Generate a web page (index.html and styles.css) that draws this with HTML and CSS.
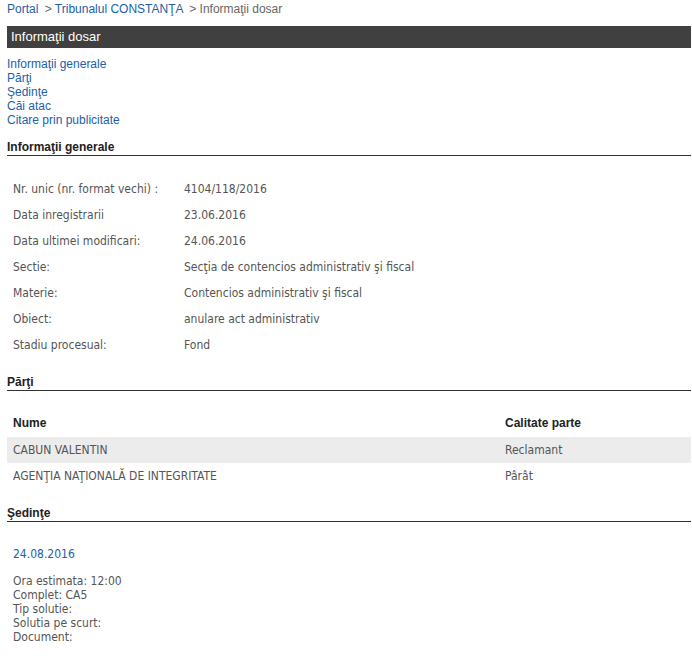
FILE: index.html
```html
<!DOCTYPE html>
<html lang="ro">
<head>
<meta charset="utf-8">
<title>Informaţii dosar</title>
<link rel="stylesheet" href="styles.css">
</head>
<body>
<div class="page">
  <div class="breadcrumb">
    <a href="#">Portal</a> <span class="sep">&gt;</span> <a href="#">Tribunalul CONSTANŢA</a> <span class="sep">&gt; Informaţii dosar</span>
  </div>
  <div class="titlebar">Informaţii dosar</div>
  <div class="toc">
    <a href="#gen">Informaţii generale</a>
    <a href="#parti">Părţi</a>
    <a href="#sed">Şedinţe</a>
    <a href="#cai">Căi atac</a>
    <a href="#cit">Citare prin publicitate</a>
  </div>

  <h2 class="section-title" id="gen">Informaţii generale</h2>
  <table class="info">
    <tr><td class="lbl">Nr. unic (nr. format vechi) :</td><td>4104/118/2016</td></tr>
    <tr><td class="lbl">Data inregistrarii</td><td>23.06.2016</td></tr>
    <tr><td class="lbl">Data ultimei modificari:</td><td>24.06.2016</td></tr>
    <tr><td class="lbl">Sectie:</td><td>Secţia de contencios administrativ şi fiscal</td></tr>
    <tr><td class="lbl">Materie:</td><td>Contencios administrativ şi fiscal</td></tr>
    <tr><td class="lbl">Obiect:</td><td>anulare act administrativ</td></tr>
    <tr><td class="lbl">Stadiu procesual:</td><td>Fond</td></tr>
  </table>

  <h2 class="section-title" id="parti">Părţi</h2>
  <table class="parti">
    <tr class="head"><th class="name">Nume</th><th>Calitate parte</th></tr>
    <tr class="alt"><td class="name">CABUN VALENTIN</td><td>Reclamant</td></tr>
    <tr><td class="name">AGENŢIA NAŢIONALĂ DE INTEGRITATE</td><td>Pârât</td></tr>
  </table>

  <h2 class="section-title" id="sed">Şedinţe</h2>
  <div class="sedinta">
    <div class="date">24.08.2016</div>
    <div class="details">
      <div>Ora estimata: 12:00</div>
      <div>Complet: CA5</div>
      <div>Tip solutie:</div>
      <div>Solutia pe scurt:</div>
      <div>Document:</div>
    </div>
  </div>
</div>
</body>
</html>
```

FILE: styles.css
```css
html, body {
  margin: 0;
  padding: 0;
  background: #ffffff;
}

.page {
  padding: 0 1px 0 7px;
  font-family: "Liberation Sans", Arial, sans-serif;
  font-size: 12px;
  color: #333333;
}

a {
  color: #2161ab;
  text-decoration: none;
}

.breadcrumb {
  line-height: 18px;
  height: 18px;
  font-size: 12px;
}

.breadcrumb .sep {
  color: #666666;
  margin-left: 3px;
}

.titlebar {
  margin-top: 8px;
  height: 22px;
  line-height: 22px;
  background: #404040;
  color: #ffffff;
  font-size: 13px;
  padding-left: 4px;
}

.toc {
  margin-top: 9px;
  display: flex;
  flex-direction: column;
  line-height: normal;
}

.section-title {
  margin: 13px 0 0 0;
  font-size: 12px;
  font-weight: bold;
  line-height: 14px;
  color: #222222;
  padding-bottom: 1px;
  border-bottom: 1px solid #333333;
}

.info + .section-title,
.parti + .section-title {
  margin-top: 17px;
}

table {
  border-collapse: collapse;
  width: 100%;
}

.info {
  margin-top: 20px;
  font-family: "DejaVu Sans Condensed", "DejaVu Sans", sans-serif;
  font-size: 12px;
  color: #555555;
}

.info td {
  height: 26px;
  padding: 0;
  vertical-align: middle;
}

.info td.lbl {
  width: 177px;
  padding-left: 6px;
  box-sizing: border-box;
}

.parti {
  margin-top: 18px;
  font-family: "DejaVu Sans Condensed", "DejaVu Sans", sans-serif;
  font-size: 12px;
  color: #555555;
}

.parti th {
  font-family: "Liberation Sans", Arial, sans-serif;
  font-weight: bold;
  color: #222222;
  text-align: left;
  height: 28px;
  padding: 0;
  vertical-align: middle;
}

.parti td {
  height: 26px;
  padding: 0;
  vertical-align: middle;
}

.parti .name {
  width: 498px;
  padding-left: 6px;
  box-sizing: border-box;
}

.parti tr.alt {
  background: #ececec;
}

.sedinta {
  padding-left: 6px;
  font-family: "DejaVu Sans Condensed", "DejaVu Sans", sans-serif;
  font-size: 12px;
  color: #555555;
}

.sedinta .date {
  margin-top: 25px;
  line-height: 14px;
  color: #2161ab;
}

.sedinta .details {
  margin-top: 13px;
  line-height: 14px;
}
```
